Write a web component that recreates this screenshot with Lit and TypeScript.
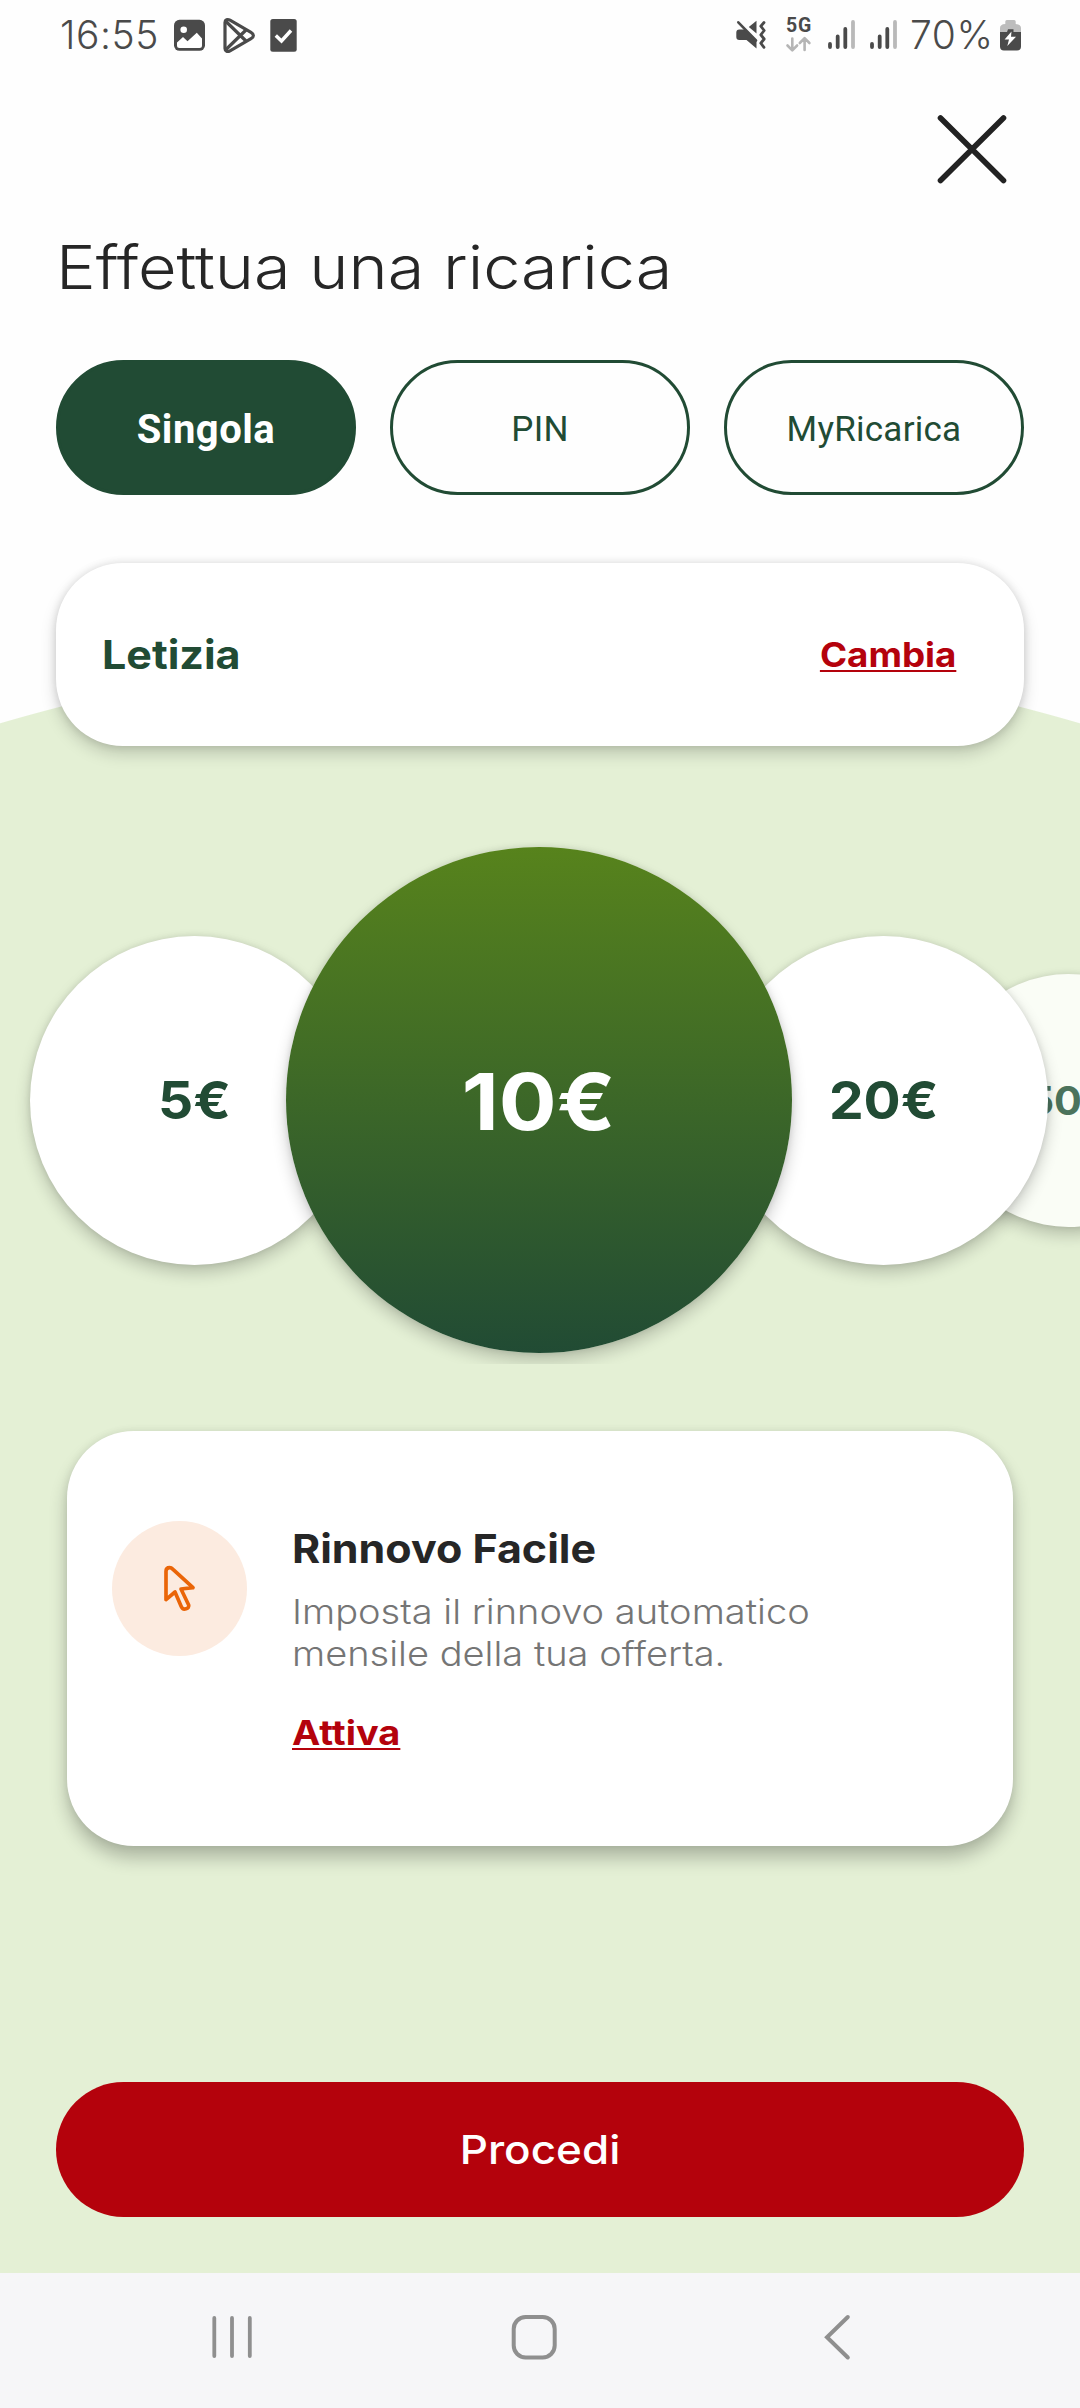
import { LitElement, html, css, svg } from "lit";
import { customElement, property, state } from "lit/decorators.js";
import { classMap } from "lit/directives/class-map.js";

@customElement("status-bar")
class StatusBar extends LitElement {
  static styles = css`
    :host {
      display: flex;
      height: 70px;
      padding: 0 59px 0 60px;
      font: 300 39px/70px Inter, "Liberation Sans", sans-serif;
      letter-spacing: 0.6px;
      color: #4a4a4a;
      box-sizing: border-box;
    }
    svg { display: block; flex: none; }
    .left, .right { display: flex; }
    .right { margin-left: auto; }
    .time { width: 114px; }
    .play { margin-left: 18px; }
    .check { margin-left: 14px; }
    .net { margin: 0 16px 0 19px; width: 27px; padding-top: 16px; }
    .gen {
      font: 700 19.5px/20px Roboto, sans-serif;
      letter-spacing: 0.8px;
      padding-left: 1px;
    }
    .sig2 { margin-left: 14px; }
    .percent { width: 90px; margin-left: 12px; }
  `;

  private bars(x: number) {
    return svg`
      <path d="M${x + 2} 44V47M${x + 9.7} 36.5V47M${x + 17.3} 29V47" stroke="#4a4a4a" stroke-width="3.8" stroke-linecap="round"/>
      <path d="M${x + 25} 22V47" stroke="#b9b9b9" stroke-width="3.8" stroke-linecap="round"/>`;
  }

  render() {
    return html`
      <div class="left">
        <div class="time">16:55</div>
        <svg width="31" height="70" viewBox="174 0 31 70">
          <rect x="174" y="19.8" width="31" height="31" rx="5.5" fill="#4a4a4a"/>
          <circle cx="183.7" cy="29.8" r="3.3" fill="#fff"/>
          <path d="M177 42.5L183 37L187.5 41.2L196.8 32.8L202 38.5V45.5Q202 48 199.5 48H179.5Q177 48 177 45.5Z" fill="#fff"/>
        </svg>
        <svg class="play" width="33" height="70" viewBox="223 0 33 70" fill="none" stroke="#4a4a4a" stroke-width="3.2" stroke-linejoin="round">
          <path d="M225 22.5C225 19.5 227.5 18.8 230 20.2L251 32.3C254.2 34.2 254.2 36.8 251 38.7L230 50.8C227.5 52.2 225 51.5 225 48.5Z"/>
          <path d="M226 21.5L246 41M226 49.5L246 30"/>
        </svg>
        <svg class="check" width="28" height="70" viewBox="270 0 28 70">
          <rect x="270.3" y="19" width="26.4" height="32.8" rx="2.5" fill="#4a4a4a"/>
          <path d="M275.8 35.5L281.5 41L291 30.5" fill="none" stroke="#fff" stroke-width="3.4"/>
        </svg>
      </div>
      <div class="right">
        <svg width="30" height="70" viewBox="737 0 30 70">
          <path d="M737.3 32.5Q737.3 29.5 740.3 29.5H746L757.5 41.5V48.6L747.5 40H740.3Q737.3 40 737.3 37Z" fill="#4a4a4a"/>
          <path d="M749.8 27L757.5 20.8V33.5Z" fill="#4a4a4a"/>
          <path d="M739.3 22.3L757 40.5" stroke="#4a4a4a" stroke-width="2.6" stroke-linecap="round"/>
          <path d="M765 22.5L761.8 26.2L765.2 30.5L761.8 34.8L765.2 39L761.8 43.2L765 47.3" fill="none" stroke="#4a4a4a" stroke-width="2.8" stroke-linecap="round" stroke-linejoin="round"/>
        </svg>
        <div class="net">
          <div class="gen">5G</div>
          <svg width="27" height="34" viewBox="786 36 27 34" fill="none" stroke="#b5b5b5" stroke-width="2.6" stroke-linecap="round" stroke-linejoin="round">
            <path d="M793.3 38.5V50M788.5 45.5L793.3 50.3L798.1 45.5M805.6 50V38.5M800.8 43L805.6 38.2L810.4 43"/>
          </svg>
        </div>
        <svg width="28" height="70" viewBox="829 0 28 70">${this.bars(829)}</svg>
        <svg class="sig2" width="28" height="70" viewBox="870 0 28 70">${this.bars(870)}</svg>
        <div class="percent">70%</div>
        <svg width="21" height="70" viewBox="1000 0 21 70">
          <path d="M1000 33V28Q1000 24.3 1005.3 24V21.5Q1005.3 20 1006.8 20H1014.2Q1015.7 20 1015.7 21.5V24Q1021 24.3 1021 28V33Z" fill="#bdbdbd"/>
          <path d="M1000 32H1007L1008 29.2H1013.5V32H1021V46.5Q1021 50.5 1017 50.5H1004Q1000 50.5 1000 46.5Z" fill="#4a4a4a"/>
          <path d="M1011.5 31.5L1004.6 39.6H1009L1007.3 46L1016 36.8H1011Z" fill="#fff"/>
        </svg>
      </div>`;
  }
}

@customElement("amount-carousel")
class AmountCarousel extends LitElement {
  static styles = css`
    :host {
      display: flex;
      align-items: center;
      height: 528px;
      padding-left: 30px;
      overflow: hidden;
      box-sizing: border-box;
    }
    .bubble {
      flex: none;
      display: flex;
      align-items: center;
      justify-content: center;
      box-sizing: border-box;
      border-radius: 50%;
      background: #fff;
      color: #214b34;
      font: 700 52px/1.2 Inter, "Liberation Sans", sans-serif;
      padding-top: 2px;
      box-shadow: 0 8px 16px rgba(0, 0, 0, 0.2), 0 0 6px rgba(0, 0, 0, 0.1);
      position: relative;
      z-index: 1;
    }
    .amount { transform: scaleX(1.06); }
    .near { width: 329px; height: 329px; }
    .selected {
      width: 506px;
      height: 506px;
      margin: 0 -73px;
      z-index: 2;
      background: linear-gradient(#57831c, #214b34);
      color: #fff;
      font-size: 79px;
    }
    .selected .amount { transform: scaleX(1.087); }
    .far {
      width: 253px;
      height: 253px;
      margin-left: -106px;
      z-index: 0;
      background: #fafdf6;
      color: #4c735c;
      font-size: 39px;
    }
  `;
  @property({ attribute: false }) amounts: { value: number; size: string }[] = [];

  render() {
    return this.amounts.map((a) => html`<div class="bubble ${a.size}"><span class="amount">${a.value}€</span></div>`);
  }
}

@customElement("app-root")
class AppRoot extends LitElement {
  static styles = css`
    :host {
      display: flex;
      flex-direction: column;
      width: 1080px;
      height: 2408px;
      overflow: hidden;
      font-family: Inter, "Liberation Sans", sans-serif;
      background: radial-gradient(circle at 540px 2570px, #e4f0d5 1923.5px, #fefefe 1924.5px);
    }
    svg { display: block; }
    header { display: flex; justify-content: flex-end; height: 161px; padding: 42px 71px 0 0; box-sizing: border-box; }
    h1 {
      margin: 0 56px;
      font-weight: 300;
      font-size: 60px;
      line-height: 72px;
      transform: scaleX(1.11);
      transform-origin: left;
      color: #262626;
    }
    .tabs { display: flex; gap: 34px; margin: 57px 56px 0; }
    .tab {
      flex: 1;
      height: 135px;
      padding: 4px 0 0;
      border: 3px solid #214b34;
      border-radius: 67.5px;
      box-sizing: border-box;
      background: transparent;
      color: #214b34;
      font: 400 35px/40px Roboto, sans-serif;
      letter-spacing: 0.25px;
    }
    .tab.active { background: #214b34; color: #fff; font-size: 40px; font-weight: 700; letter-spacing: 0.5px; }
    .card { background: #fff; border-radius: 67px; box-sizing: border-box; }
    .line {
      display: flex;
      justify-content: space-between;
      align-items: center;
      height: 183px;
      margin: 68px 56px 0;
      padding: 0 68px 0 46px;
      box-shadow: 0 8px 16px rgba(0, 0, 0, 0.17), 0 0 8px rgba(0, 0, 0, 0.12);
    }
    .name { font-weight: 700; font-size: 40px; transform: scaleX(1.075); transform-origin: left; color: #214b34; }
    .link {
      display: inline-block;
      font-weight: 700;
      font-size: 34px;
      line-height: 42px;
      transform: scaleX(1.08);
      transform-origin: right;
      color: #b4020c;
      text-decoration: underline 2px;
      text-underline-offset: 3px;
      text-decoration-skip-ink: none;
    }
    amount-carousel { margin-top: 90px; }
    .promo {
      display: flex;
      gap: 45px;
      height: 415px;
      margin: 67px 67px 0;
      padding: 90px 45px 0;
      box-shadow: 0 12px 18px rgba(0, 0, 0, 0.24), 0 0 8px rgba(0, 0, 0, 0.08);
    }
    .badge { width: 135px; height: 135px; border-radius: 50%; background: #fcebe0; }
    .copy { padding-top: 4px; }
    .copy .link { transform: scaleX(1.115); transform-origin: left; }
    h2 { margin: 0; font-weight: 700; font-size: 40px; line-height: 48px; transform: scaleX(1.074); transform-origin: left; color: #262626; }
    p { margin: 18px 0 37px; width: 510px; font-weight: 300; font-size: 34px; line-height: 42px; transform: scaleX(1.118); transform-origin: left; color: #757575; }
    .go {
      flex: none;
      height: 135px;
      margin: auto 56px 56px;
      padding: 0;
      border: 0;
      border-radius: 67.5px;
      background: #b4020c;
      color: #fff;
      font: 500 40px/48px Inter, sans-serif;
    }
    .go span { display: inline-block; transform: scaleX(1.1); }
    nav { flex: none; display: flex; align-items: center; height: 135px; padding: 0 0 7px 202px; background: #f6f6f8; gap: 240px; box-sizing: border-box; }
  `;
  @state() private tab = "Singola";

  render() {
    return html`
      <status-bar></status-bar>
      <header>
        <svg width="74" height="74" viewBox="936 112 74 74" stroke="#222" stroke-width="5.6" stroke-linecap="round">
          <path d="M941.5 118L1004.5 180.5M1004.5 118L941.5 180.5"/>
        </svg>
      </header>
      <h1>Effettua una ricarica</h1>
      <div class="tabs">
        ${["Singola", "PIN", "MyRicarica"].map((t) => html`
          <button class=${classMap({ tab: true, active: t === this.tab })} @click=${() => (this.tab = t)}>${t}</button>`)}
      </div>
      <section class="card line">
        <span class="name">Letizia</span>
        <span class="link">Cambia</span>
      </section>
      <amount-carousel .amounts=${[
        { value: 5, size: "near" },
        { value: 10, size: "selected" },
        { value: 20, size: "near" },
        { value: 50, size: "far" },
      ]}></amount-carousel>
      <section class="card promo">
        <div class="badge">
          <svg width="135" height="135" viewBox="36 33 405 405" fill="none" stroke="#ea6508" stroke-width="11" stroke-linejoin="round">
            <path d="M198 184Q198 173 209 173Q214 173 219 178L279 233L243 237L266 285C270 296 249 303 244 290L225 246L198 269Z"/>
          </svg>
        </div>
        <div class="copy">
          <h2>Rinnovo Facile</h2>
          <p>Imposta il rinnovo automatico mensile della tua offerta.</p>
          <span class="link">Attiva</span>
        </div>
      </section>
      <button class="go"><span>Procedi</span></button>
      <nav>
        <svg width="60" height="60" viewBox="202 2307 60 60" stroke="#8f8f8f" stroke-width="3.8" stroke-linecap="round">
          <path d="M214.3 2318V2356M232 2318V2356M249.8 2318V2356"/>
        </svg>
        <svg width="64" height="60" viewBox="502 2307 64 60" fill="none" stroke="#8f8f8f" stroke-width="4">
          <rect x="513.7" y="2317" width="41" height="40.5" rx="12"/>
        </svg>
        <svg width="60" height="60" viewBox="806 2307 60 60" fill="none" stroke="#8f8f8f" stroke-width="4" stroke-linecap="round" stroke-linejoin="miter">
          <path d="M847.8 2317L827 2337.2L847.8 2357.5"/>
        </svg>
      </nav>`;
  }
}
